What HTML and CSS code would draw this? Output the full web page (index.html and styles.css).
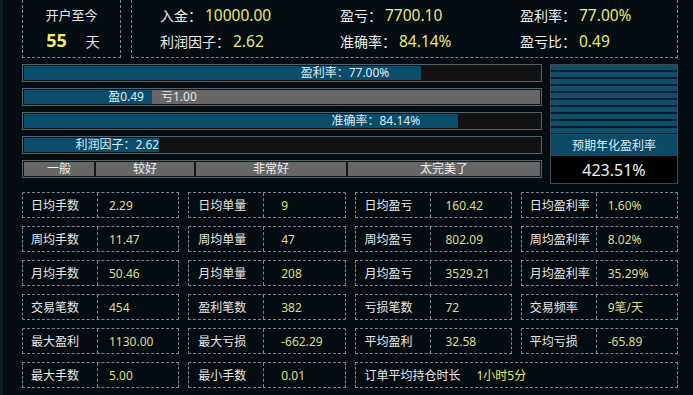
FILE: index.html
```html
<!DOCTYPE html>
<html lang="zh-CN">
<head>
<meta charset="utf-8">
<title>账户统计</title>
<link rel="stylesheet" href="styles.css">
</head>
<body>
<div class="page">
  <div class="top">
    <div class="since">
      <div class="since-t">开户至今</div>
      <div class="since-v"><span class="days">55</span><span class="unit">天</span></div>
    </div>
    <div class="summary">
      <div class="sum-item"><span class="k">入金：</span><span class="v">10000.00</span></div>
      <div class="sum-item"><span class="k">盈亏：</span><span class="v">7700.10</span></div>
      <div class="sum-item"><span class="k">盈利率：</span><span class="v">77.00%</span></div>
      <div class="sum-item"><span class="k">利润因子：</span><span class="v">2.62</span></div>
      <div class="sum-item"><span class="k">准确率：</span><span class="v">84.14%</span></div>
      <div class="sum-item"><span class="k">盈亏比：</span><span class="v">0.49</span></div>
    </div>
  </div>

  <div class="mid">
    <div class="bars">
      <div class="bar"><div class="fill pad-a" style="width:77%">盈利率：77.00%</div></div>
      <div class="bar"><div class="fill pad-b" style="width:24.8%">盈0.49</div><div class="loss">亏1.00</div></div>
      <div class="bar"><div class="fill pad-c" style="width:84.14%">准确率：84.14%</div></div>
      <div class="bar"><div class="fill pad-d" style="width:26.2%">利润因子：2.62</div></div>
      <div class="scale">
        <div class="seg s1">一般</div>
        <div class="seg s2">较好</div>
        <div class="seg s3">非常好</div>
        <div class="seg s4">太完美了</div>
      </div>
    </div>
    <div class="annual">
      <div class="stripes"></div>
      <div class="annual-label">预期年化盈利率</div>
      <div class="annual-value">423.51%</div>
    </div>
  </div>

  <div class="stats">
    <div class="cell"><div class="lab">日均手数</div><div class="val">2.29</div></div>
    <div class="cell"><div class="lab">日均单量</div><div class="val">9</div></div>
    <div class="cell"><div class="lab">日均盈亏</div><div class="val">160.42</div></div>
    <div class="cell"><div class="lab">日均盈利率</div><div class="val">1.60%</div></div>

    <div class="cell"><div class="lab">周均手数</div><div class="val">11.47</div></div>
    <div class="cell"><div class="lab">周均单量</div><div class="val">47</div></div>
    <div class="cell"><div class="lab">周均盈亏</div><div class="val">802.09</div></div>
    <div class="cell"><div class="lab">周均盈利率</div><div class="val">8.02%</div></div>

    <div class="cell"><div class="lab">月均手数</div><div class="val">50.46</div></div>
    <div class="cell"><div class="lab">月均单量</div><div class="val">208</div></div>
    <div class="cell"><div class="lab">月均盈亏</div><div class="val">3529.21</div></div>
    <div class="cell"><div class="lab">月均盈利率</div><div class="val">35.29%</div></div>

    <div class="cell"><div class="lab">交易笔数</div><div class="val">454</div></div>
    <div class="cell"><div class="lab">盈利笔数</div><div class="val">382</div></div>
    <div class="cell"><div class="lab">亏损笔数</div><div class="val">72</div></div>
    <div class="cell"><div class="lab">交易频率</div><div class="val">9笔/天</div></div>

    <div class="cell"><div class="lab">最大盈利</div><div class="val">1130.00</div></div>
    <div class="cell"><div class="lab">最大亏损</div><div class="val">-662.29</div></div>
    <div class="cell"><div class="lab">平均盈利</div><div class="val">32.58</div></div>
    <div class="cell"><div class="lab">平均亏损</div><div class="val">-65.89</div></div>

    <div class="cell"><div class="lab">最大手数</div><div class="val">5.00</div></div>
    <div class="cell"><div class="lab">最小手数</div><div class="val">0.01</div></div>
    <div class="cell wide"><div class="lab">订单平均持仓时长</div><div class="val">1小时5分</div></div>
  </div>
</div>
</body>
</html>
```

FILE: styles.css
```css
* { box-sizing: border-box; }
html, body { margin: 0; padding: 0; }
body {
  background: #050c12;
  font-family: "Noto Sans", "Noto Sans CJK SC", sans-serif;
  color: #e6e6e6;
  width: 693px;
  height: 395px;
  overflow: hidden;
}
.page {
  height: 395px;
  border-left: 3px solid #0c1a24;
  padding-left: 19px;
  width: 680px;
}

/* top */
.top {
  display: flex;
  gap: 10px;
  height: 58px;
}
.since, .summary {
  border: 1px dashed #7d8790;
  border-top: none;
}
.since {
  width: 99px;
  display: flex;
  flex-direction: column;
  align-items: center;
  padding-top: 4px;
}
.since-t {
  font-size: 13px;
  line-height: 22px;
  color: #e6e6e6;
}
.since-v {
  display: flex;
  align-items: baseline;
  gap: 19px;
  line-height: 28px;
  margin-left: 3px;
}
.days {
  font-size: 18px;
  font-weight: 700;
  color: #eef063;
}
.unit {
  font-size: 14px;
  color: #e6e6e6;
}
.summary {
  width: 547px;
  display: grid;
  grid-template-columns: 180px 180px 1fr;
  grid-auto-rows: 26px;
  padding: 2px 0 0 28px;
}
.sum-item {
  display: flex;
  align-items: center;
  white-space: nowrap;
}
.sum-item .k {
  font-size: 14px;
  color: #ececec;
}
.sum-item .v {
  font-size: 15.5px;
  color: #e8e878;
  margin-left: 3px;
}

/* middle */
.mid {
  display: flex;
  gap: 8px;
  margin-top: 6px;
  height: 120px;
}
.bars {
  width: 520px;
  display: flex;
  flex-direction: column;
  gap: 6px;
}
.bar {
  height: 18px;
  border: 1px solid #56626a;
  padding: 1px;
  background: #131313;
  display: flex;
}
.fill {
  background: #0b4d6b;
  height: 100%;
  display: flex;
  align-items: center;
  justify-content: flex-end;
  font-size: 12px;
  color: #dcecf4;
  white-space: nowrap;
  line-height: 14px;
}
.pad-a { padding-right: 32px; }
.pad-b { padding-right: 8px; }
.pad-c { padding-right: 38px; }
.pad-d { padding-right: 0; }
.loss {
  flex: 1;
  background: #676767;
  display: flex;
  align-items: center;
  padding-left: 9px;
  font-size: 12px;
  color: #e6e6e6;
  line-height: 14px;
}
.scale {
  height: 18px;
  border: 1px solid #56626a;
  padding: 1px;
  background: #161616;
  display: flex;
  gap: 2px;
}
.seg {
  background: #666666;
  font-size: 12px;
  line-height: 14px;
  color: #f0f0f0;
  display: flex;
  align-items: center;
  justify-content: center;
}
.s1 { width: 70px; }
.s2 { width: 98px; }
.s3 { width: 150px; }
.s4 { flex: 1; }

.annual {
  width: 128px;
  border: 1px solid #3c4a54;
  display: flex;
  flex-direction: column;
}
.stripes {
  height: 69px;
  background: repeating-linear-gradient(to bottom, #0f5068 0 5px, #0b1a33 5px 7px);
}
.annual-label {
  height: 22px;
  background: #0c4a66;
  color: #dcecf4;
  font-size: 12px;
  display: flex;
  align-items: center;
  justify-content: center;
}
.annual-value {
  flex: 1;
  background: #000;
  color: #f2f2f2;
  font-size: 16px;
  display: flex;
  align-items: center;
  justify-content: center;
}

/* stats */
.stats {
  margin-top: 8px;
  width: 656px;
  display: grid;
  grid-template-columns: repeat(4, 1fr);
  grid-auto-rows: 26px;
  column-gap: 9px;
  row-gap: 8px;
}
.cell {
  border: 1px dashed #7d8790;
  display: grid;
  grid-template-columns: 75px 1fr;
  font-size: 12px;
  white-space: nowrap;
}
.cell .lab {
  border-right: 1px dashed #7d8790;
  display: flex;
  align-items: center;
  padding-left: 8px;
  color: #e8e8e8;
}
.cell .val {
  display: flex;
  align-items: center;
  padding-left: 11px;
  color: #dcdc8a;
}
.cell:nth-child(4n+2) .val { padding-left: 17px; }
.cell:nth-child(4n+3) .val { padding-left: 15px; }
.cell:nth-child(4n+2) .lab,
.cell:nth-child(4n+3) .lab { padding-left: 9px; }
.cell.wide {
  grid-column: span 2;
  grid-template-columns: 120px 1fr;
}
.cell.wide .lab {
  border-right: none;
  padding-left: 9px;
}
.cell.wide .val {
  padding-left: 1px;
  color: #e8e86a;
}
```
